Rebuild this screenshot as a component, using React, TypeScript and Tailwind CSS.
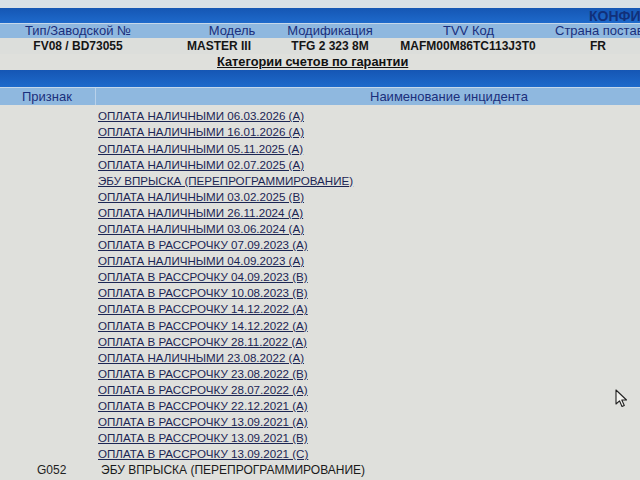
import React from "react";

const rows: { code?: string; label: string; link: boolean }[] = [
  { label: "ОПЛАТА НАЛИЧНЫМИ 06.03.2026 (А)", link: true },
  { label: "ОПЛАТА НАЛИЧНЫМИ 16.01.2026 (А)", link: true },
  { label: "ОПЛАТА НАЛИЧНЫМИ 05.11.2025 (А)", link: true },
  { label: "ОПЛАТА НАЛИЧНЫМИ 02.07.2025 (А)", link: true },
  { label: "ЭБУ ВПРЫСКА (ПЕРЕПРОГРАММИРОВАНИЕ)", link: true },
  { label: "ОПЛАТА НАЛИЧНЫМИ 03.02.2025 (B)", link: true },
  { label: "ОПЛАТА НАЛИЧНЫМИ 26.11.2024 (А)", link: true },
  { label: "ОПЛАТА НАЛИЧНЫМИ 03.06.2024 (А)", link: true },
  { label: "ОПЛАТА В РАССРОЧКУ 07.09.2023 (А)", link: true },
  { label: "ОПЛАТА НАЛИЧНЫМИ 04.09.2023 (А)", link: true },
  { label: "ОПЛАТА В РАССРОЧКУ 04.09.2023 (B)", link: true },
  { label: "ОПЛАТА В РАССРОЧКУ 10.08.2023 (B)", link: true },
  { label: "ОПЛАТА В РАССРОЧКУ 14.12.2022 (А)", link: true },
  { label: "ОПЛАТА В РАССРОЧКУ 14.12.2022 (А)", link: true },
  { label: "ОПЛАТА В РАССРОЧКУ 28.11.2022 (А)", link: true },
  { label: "ОПЛАТА НАЛИЧНЫМИ 23.08.2022 (А)", link: true },
  { label: "ОПЛАТА В РАССРОЧКУ 23.08.2022 (B)", link: true },
  { label: "ОПЛАТА В РАССРОЧКУ 28.07.2022 (А)", link: true },
  { label: "ОПЛАТА В РАССРОЧКУ 22.12.2021 (А)", link: true },
  { label: "ОПЛАТА В РАССРОЧКУ 13.09.2021 (А)", link: true },
  { label: "ОПЛАТА В РАССРОЧКУ 13.09.2021 (B)", link: true },
  { label: "ОПЛАТА В РАССРОЧКУ 13.09.2021 (С)", link: true },
  { code: "G052", label: "ЭБУ ВПРЫСКА (ПЕРЕПРОГРАММИРОВАНИЕ)", link: false },
];

function Cursor() {
  return (
    <svg
      className="absolute left-[615px] top-[389px]"
      width="14"
      height="20"
      viewBox="0 0 14 20"
    >
      <path
        d="M1 1 L1 15 L4.5 11.8 L7 17.5 L9.3 16.5 L6.8 11 L11.5 11 Z"
        fill="#f4f4f0"
        stroke="#222"
        strokeWidth="1.1"
        strokeLinejoin="round"
      />
    </svg>
  );
}

export default function App() {
  return (
    <div
      className="relative h-[480px] w-[640px] overflow-hidden bg-[#dfe0dc] text-[#111]"
      style={{ fontFamily: '"Liberation Sans", Arial, sans-serif' }}
    >
      {/* top strip */}
      <div className="h-[8px] bg-[#d9e0e6]" />
      <div className="flex h-[15px] items-center overflow-hidden whitespace-nowrap bg-gradient-to-b from-[#1556b4] to-[#1e6acb] pl-[589px] text-[14px] font-bold leading-none text-[#11307a]">
        КОНФИГУРАЦИЯ
      </div>
      <div className="h-px bg-[#c6d8ea]" />
      {/* vehicle header */}
      <div className="flex h-[14px] items-center overflow-hidden whitespace-nowrap bg-[#8fb8df] text-[13px] text-[#1a2f7c]">
        <div className="flex w-[156px] shrink-0 justify-center">Тип/Заводской №</div>
        <div className="flex w-[152px] shrink-0 justify-center">Модель</div>
        <div className="flex w-[44px] shrink-0 justify-center">Модификация</div>
        <div className="w-[203px] shrink-0 pl-[91px]">TVV Код</div>
        <div className="shrink-0">Страна поставки</div>
      </div>
      <div className="flex h-[16px] items-center whitespace-nowrap bg-[#dcdedb] text-[12px] font-bold text-[#151515]">
        <div className="flex w-[156px] justify-center">FV08 / BD73055</div>
        <div className="flex w-[126px] justify-center">MASTER III</div>
        <div className="flex w-[96px] justify-center">TFG 2 323 8M</div>
        <div className="flex w-[180px] justify-center">MAFM00M86TC113J3T0</div>
        <div className="flex w-[80px] justify-center">FR</div>
      </div>
      <div className="flex h-[16px] items-center pl-[217px] text-[12.8px] font-bold text-[#111] underline">
        Категории счетов по гарантии
      </div>
      {/* incidents table */}
      <div className="h-[17px] bg-gradient-to-b from-[#1556b4] to-[#1e6acb]" />
      <div className="h-px bg-[#c6d8ea]" />
      <div className="flex h-[17px] items-center whitespace-nowrap bg-[#8fb8df] text-[13px] text-[#1a2f7c]">
        <div className="w-[95px] pl-[22px]">Признак</div>
        <div className="h-full w-px bg-[#b9d1ea]" />
        <div className="pl-[274px]">Наименование инцидента</div>
      </div>
      <div className="pt-[3px]">
        {rows.map((r, i) => (
          <div key={i} className="flex h-[16.1px] items-center whitespace-nowrap text-[11.6px]">
            <div className="w-[98px] pl-[37px] text-[12px] text-[#222]">{r.code ?? ""}</div>
            {r.link ? (
              <span className="text-[#1c2654] underline decoration-[#1c2654] underline-offset-1">
                {r.label}
              </span>
            ) : (
              <span className="pl-[3px] text-[12px] text-[#1a1a1a]">{r.label}</span>
            )}
          </div>
        ))}
      </div>
      <Cursor />
    </div>
  );
}
